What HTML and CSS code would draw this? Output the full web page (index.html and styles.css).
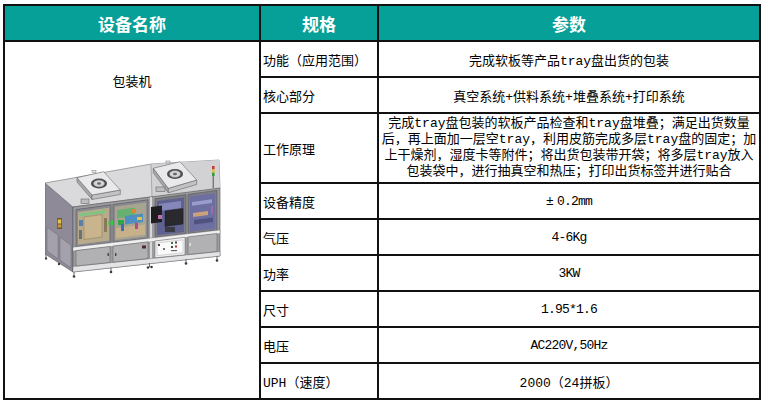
FILE: index.html
```html
<!DOCTYPE html>
<html lang="zh-CN">
<head>
<meta charset="utf-8">
<title>设备参数</title>
<link rel="stylesheet" href="styles.css">
</head>
<body>
<div class="sheet">
  <div class="hd">设备名称</div>
  <div class="hd">规格</div>
  <div class="hd">参数</div>

  <div class="device">
    <div class="device-name">包装机</div>
    <svg class="machine" viewBox="0 -4 178 126" width="178" height="126" aria-label="包装机">
      <!-- left side face -->
      <polygon points="0,23 28,47 28,112 0,94" fill="#8e8a97" stroke="#5a5862" stroke-width=".6"/>
      <polygon points="2,67 13,75 13,99 2,91" fill="#a4a1ad" stroke="#6a6872" stroke-width=".5"/>
      <polygon points="15,77 26,85 26,108 15,100" fill="#a4a1ad" stroke="#6a6872" stroke-width=".5"/>
      <rect x="12" y="58" width="5" height="11" fill="#6b5a2a"/>
      <rect x="12.8" y="59.5" width="3.4" height="4" fill="#e3c34a"/>
      <rect x="12.8" y="64.5" width="3.4" height="3" fill="#c99a3a"/>
      <!-- top face -->
      <polygon points="0,23 106,4 174,0 175,28 28,47" fill="#dadadc" stroke="#6f6f72" stroke-width=".6"/>
      <polygon points="106,4 174,0 175,28 107,37" fill="#d2d2d5"/>
      <line x1="106" y1="4" x2="107" y2="37" stroke="#8a8a8d" stroke-width=".6"/>
      <!-- front face -->
      <polygon points="28,47 175,28 175,96 28,112" fill="#9d9da0" stroke="#555" stroke-width=".6"/>
      <line x1="106" y1="37" x2="106" y2="102" stroke="#e8e8e8" stroke-width="1.6"/>
      <!-- windows -->
      <polygon points="31,49.6 66,44.8 66,82.6 31,86.7" fill="#8a8b92" stroke="#505054" stroke-width=".6"/>
      <polygon points="33,52 64,47.8 64,80.6 33,84.4" fill="#b8ab8c"/>
      <polygon points="34,53.5 60,50 60,53 34,56.5" fill="#7fc483"/>
      <polygon points="39,57 57,54.6 57,77 39,79.5" fill="#c9b48e" stroke="#7a6a4c" stroke-width=".4"/>
      <rect x="34" y="60" width="4" height="6" fill="#5c7fa8"/>
      <rect x="34" y="70" width="3" height="9" fill="#6e6e74"/>
      <rect x="59" y="58" width="3" height="14" fill="#8a7a5c"/>

      <polygon points="68,44.6 103,39.8 103,78.3 68,82.4" fill="#8a8b92" stroke="#505054" stroke-width=".6"/>
      <polygon points="70,46.8 101,42.6 101,76.4 70,80.2" fill="#a9a48f"/>
      <polygon points="72,50 90,47.5 90,56 72,58.5" fill="#66b070"/>
      <polygon points="80,56 98,53.6 98,62 80,64.4" fill="#4f8fc0"/>
      <rect x="73" y="60" width="6" height="5" fill="#2fa64a"/>
      <rect x="87" y="49" width="4" height="4" fill="#d9863a"/>
      <rect x="92" y="57" width="5" height="3" fill="#e2c04a"/>
      <polygon points="71,68 100,64.4 100,74.6 71,78" fill="#c8b08a"/>
      <rect x="76" y="64" width="3" height="7" fill="#3b6fb5"/>
      <rect x="90" y="63" width="3" height="6" fill="#b04a8a"/>
      <rect x="63.5" y="61" width="2" height="4.5" fill="#2ecc40"/>
      <rect x="66.5" y="60.6" width="2" height="4.5" fill="#2ecc40"/>

      <polygon points="110,38.8 141,34.6 141,73.9 110,77.5" fill="#7c7d86" stroke="#505054" stroke-width=".6"/>
      <polygon points="112,41 139,37.4 139,72 112,75.3" fill="#5f6190"/>
      <polygon points="114,44 136,41 136,48 114,51" fill="#8587b8"/>
      <polygon points="106,47 117,45.5 117,62 106,63.5" fill="#1e1e22"/>
      <polygon points="120,51 138,48.6 138,64 120,66.5" fill="#2a2a2e" stroke="#111" stroke-width=".4"/>
      <rect x="120" y="67" width="10" height="5" fill="#3a3a44"/>
      <rect x="113" y="55" width="4" height="4" fill="#c06fa8"/>

      <polygon points="143,34.4 172,30.4 172,70.4 143,73.7" fill="#7c7d86" stroke="#505054" stroke-width=".6"/>
      <polygon points="145,36.6 170,33.2 170,68.4 145,71.4" fill="#6d6fa2"/>
      <polygon points="147,42 167,39.3 167,43 147,45.7" fill="#9a9ccc"/>
      <polygon points="148,53 163,51 163,55 148,57" fill="#caa27a"/>
      <polygon points="149,60 168,57.5 168,62 149,64.5" fill="#505280"/>
      <rect x="166" y="46" width="2" height="8" fill="#a06ca0"/>
      <!-- rails -->
      <polygon points="28,87.2 175,70 175,73.5 28,91" fill="#efefef" stroke="#777" stroke-width=".4"/>
      <polygon points="28,106.5 175,91.5 175,96 28,112" fill="#e4e4e6" stroke="#666" stroke-width=".4"/>
      <!-- doors -->
      <polygon points="31,90.6 65,86.5 65,102.5 31,106" fill="#b1b1b4" stroke="#5e5e62" stroke-width=".5"/>
      <polygon points="68,86.1 103,81.8 103,98.6 68,102.2" fill="#b1b1b4" stroke="#5e5e62" stroke-width=".5"/>
      <rect x="62.5" y="93" width="1.4" height="3" fill="#444"/>
      <rect x="70" y="93" width="1.4" height="3" fill="#444"/>
      <rect x="97" y="85.5" width="4" height="3" fill="#4a2a2a"/>
      <polygon points="110,81 140,77.3 140,94.8 110,97.8" fill="#f2f2f2" stroke="#5e5e62" stroke-width=".5"/>
      <polygon points="112,83 138,79.8 138,92.8 112,95.6" fill="#fafafa" stroke="#9a9a9e" stroke-width=".4"/>
      <rect x="113" y="84" width="2" height="2" fill="#444"/>
      <rect x="126" y="82" width="2" height="2" fill="#3a7a3a"/>
      <rect x="130" y="81.5" width="2" height="2" fill="#444"/>
      <rect x="126" y="86" width="2" height="2" fill="#444"/>
      <rect x="130" y="85.5" width="2" height="2" fill="#a33"/>
      <circle cx="119" cy="89" r="1" fill="#444"/>
      <rect x="126" y="90" width="6" height="1.2" fill="#666"/>
      <polygon points="143,76.9 172,73.4 172,91.5 143,94.5" fill="#b1b1b4" stroke="#5e5e62" stroke-width=".5"/>
      <rect x="144.5" y="83" width="1.3" height="3" fill="#eee"/>
      <!-- legs and feet -->
      <g stroke="#6a6a6e" stroke-width="1">
        <line x1="29" y1="112" x2="29" y2="116"/>
        <line x1="66" y1="107.5" x2="66" y2="111.5"/>
        <line x1="104.5" y1="103" x2="104.5" y2="107"/>
        <line x1="141" y1="99" x2="141" y2="103"/>
        <line x1="172" y1="96" x2="172" y2="100"/>
        <line x1="1" y1="94" x2="1" y2="98"/>
      </g>
      <g fill="#3c3c40">
        <circle cx="29" cy="116.5" r="1.3"/>
        <circle cx="66" cy="112" r="1.3"/>
        <circle cx="103" cy="107.5" r="1.3"/>
        <circle cx="106.5" cy="107" r="1.3"/>
        <circle cx="141" cy="103.5" r="1.3"/>
        <circle cx="172" cy="100.5" r="1.3"/>
        <circle cx="1" cy="98.5" r="1.2"/>
        <circle cx="14" cy="104" r="1.2"/>
      </g>
      <!-- left FFU -->
      <polygon points="32,17.7 47,35 47,39.5 32,22" fill="#a9a9ac" stroke="#555" stroke-width=".5"/>
      <polygon points="47,35 75.3,30 75.3,34.5 47,39.5" fill="#c2c2c5" stroke="#555" stroke-width=".5"/>
      <polygon points="32,17.7 58.7,11.7 75.3,30 47,35" fill="#e9e9eb" stroke="#555" stroke-width=".5"/>
      <ellipse cx="54" cy="23.5" rx="8" ry="5" fill="#4a4a4e"/>
      <ellipse cx="54" cy="23.5" rx="5.6" ry="3.4" fill="#d4d4d6" stroke="#777" stroke-width=".5"/>
      <ellipse cx="54" cy="23.5" rx="2" ry="1.2" fill="#666"/>
      <rect x="36" y="39" width="8" height="4.5" fill="#bdbdc0" stroke="#555" stroke-width=".5"/>
      <rect x="47" y="10.5" width="4" height="2" fill="#eee" stroke="#555" stroke-width=".4"/>
      <!-- right FFU -->
      <polygon points="108.3,8.3 123.3,28.3 123.3,32.8 108.3,12.8" fill="#a9a9ac" stroke="#555" stroke-width=".5"/>
      <polygon points="123.3,28.3 151.7,20 151.7,24.5 123.3,32.8" fill="#c2c2c5" stroke="#555" stroke-width=".5"/>
      <polygon points="108.3,8.3 135,1.7 151.7,20 123.3,28.3" fill="#e9e9eb" stroke="#555" stroke-width=".5"/>
      <ellipse cx="130" cy="14" rx="8" ry="5" fill="#4a4a4e"/>
      <ellipse cx="130" cy="14" rx="5.6" ry="3.4" fill="#d4d4d6" stroke="#777" stroke-width=".5"/>
      <ellipse cx="130" cy="14" rx="2" ry="1.2" fill="#666"/>
      <rect x="111" y="27" width="9" height="4.5" fill="#bdbdc0" stroke="#555" stroke-width=".5"/>
      <rect x="121" y="1" width="4" height="2" fill="#eee" stroke="#555" stroke-width=".4"/>
      <!-- signal tower -->
      <rect x="167.6" y="16" width="1.4" height="12" fill="#777"/>
      <rect x="167" y="6" width="2.6" height="3.4" fill="#c83a3a"/>
      <rect x="167" y="9.4" width="2.6" height="3.2" fill="#e3c03e"/>
      <rect x="167" y="12.6" width="2.6" height="3.4" fill="#3a9a44"/>
    </svg>
  </div>

  <div class="label">功能（应用范围）</div>
  <div class="value">完成软板等产品tray盘出货的包装</div>

  <div class="label">核心部分</div>
  <div class="value">真空系统+供料系统+堆叠系统+打印系统</div>

  <div class="label">工作原理</div>
  <div class="value long">完成tray盘包装的软板产品检查和tray盘堆叠；满足出货数量<br>后，再上面加一层空tray，利用皮筋完成多层tray盘的固定；加<br>上干燥剂，湿度卡等附件；将出货包装带开袋；将多层tray放入<br>包装袋中，进行抽真空和热压；打印出货标签并进行贴合</div>

  <div class="label">设备精度</div>
  <div class="value num"><span class="pm">±</span>0.2mm</div>

  <div class="label">气压</div>
  <div class="value num">4-6Kg</div>

  <div class="label">功率</div>
  <div class="value num">3KW</div>

  <div class="label">尺寸</div>
  <div class="value num">1.95*1.6</div>

  <div class="label">电压</div>
  <div class="value num">AC220V,50Hz</div>

  <div class="label">UPH（速度）</div>
  <div class="value">2000（24拼板）</div>
</div>
</body>
</html>
```

FILE: styles.css
```css
* {
  box-sizing: border-box;
  margin: 0;
  padding: 0;
}

html,
body {
  background: #ffffff;
}

body {
  padding: 4px 0 0 3px;
  font-family: "Liberation Mono", "Noto Sans Mono CJK SC", "Noto Sans CJK SC", monospace;
  font-size: 13px;
  color: #000000;
}

.sheet {
  display: grid;
  width: 758px;
  grid-template-columns: 254px 116px 380px;
  grid-template-rows: 34px 34px 34px 68px repeat(6, 34px);
  gap: 2px;
  padding: 2px;
  background: #111111;
}

.hd {
  background: #07a098;
  color: #ffffff;
  font-family: "Noto Sans CJK SC", sans-serif;
  font-weight: 700;
  font-size: 17px;
  display: flex;
  align-items: center;
  justify-content: center;
}

.device {
  grid-column: 1;
  grid-row: 2 / span 9;
  background: #ffffff;
  display: flex;
  flex-direction: column;
  align-items: center;
  padding-top: 32px;
}

.device-name {
  line-height: 17px;
}

.machine {
  display: block;
  margin-top: 65px;
  margin-left: 4px;
}

.label {
  grid-column: 2;
  background: #ffffff;
  display: flex;
  align-items: center;
  padding-left: 2px;
  white-space: nowrap;
}

.value {
  grid-column: 3;
  background: #ffffff;
  display: flex;
  align-items: center;
  justify-content: center;
  text-align: center;
  white-space: nowrap;
}

.value.num {
  letter-spacing: -0.8px;
}

.pm {
  margin-right: 4px;
}

.value.long {
  line-height: 16px;
}
```
